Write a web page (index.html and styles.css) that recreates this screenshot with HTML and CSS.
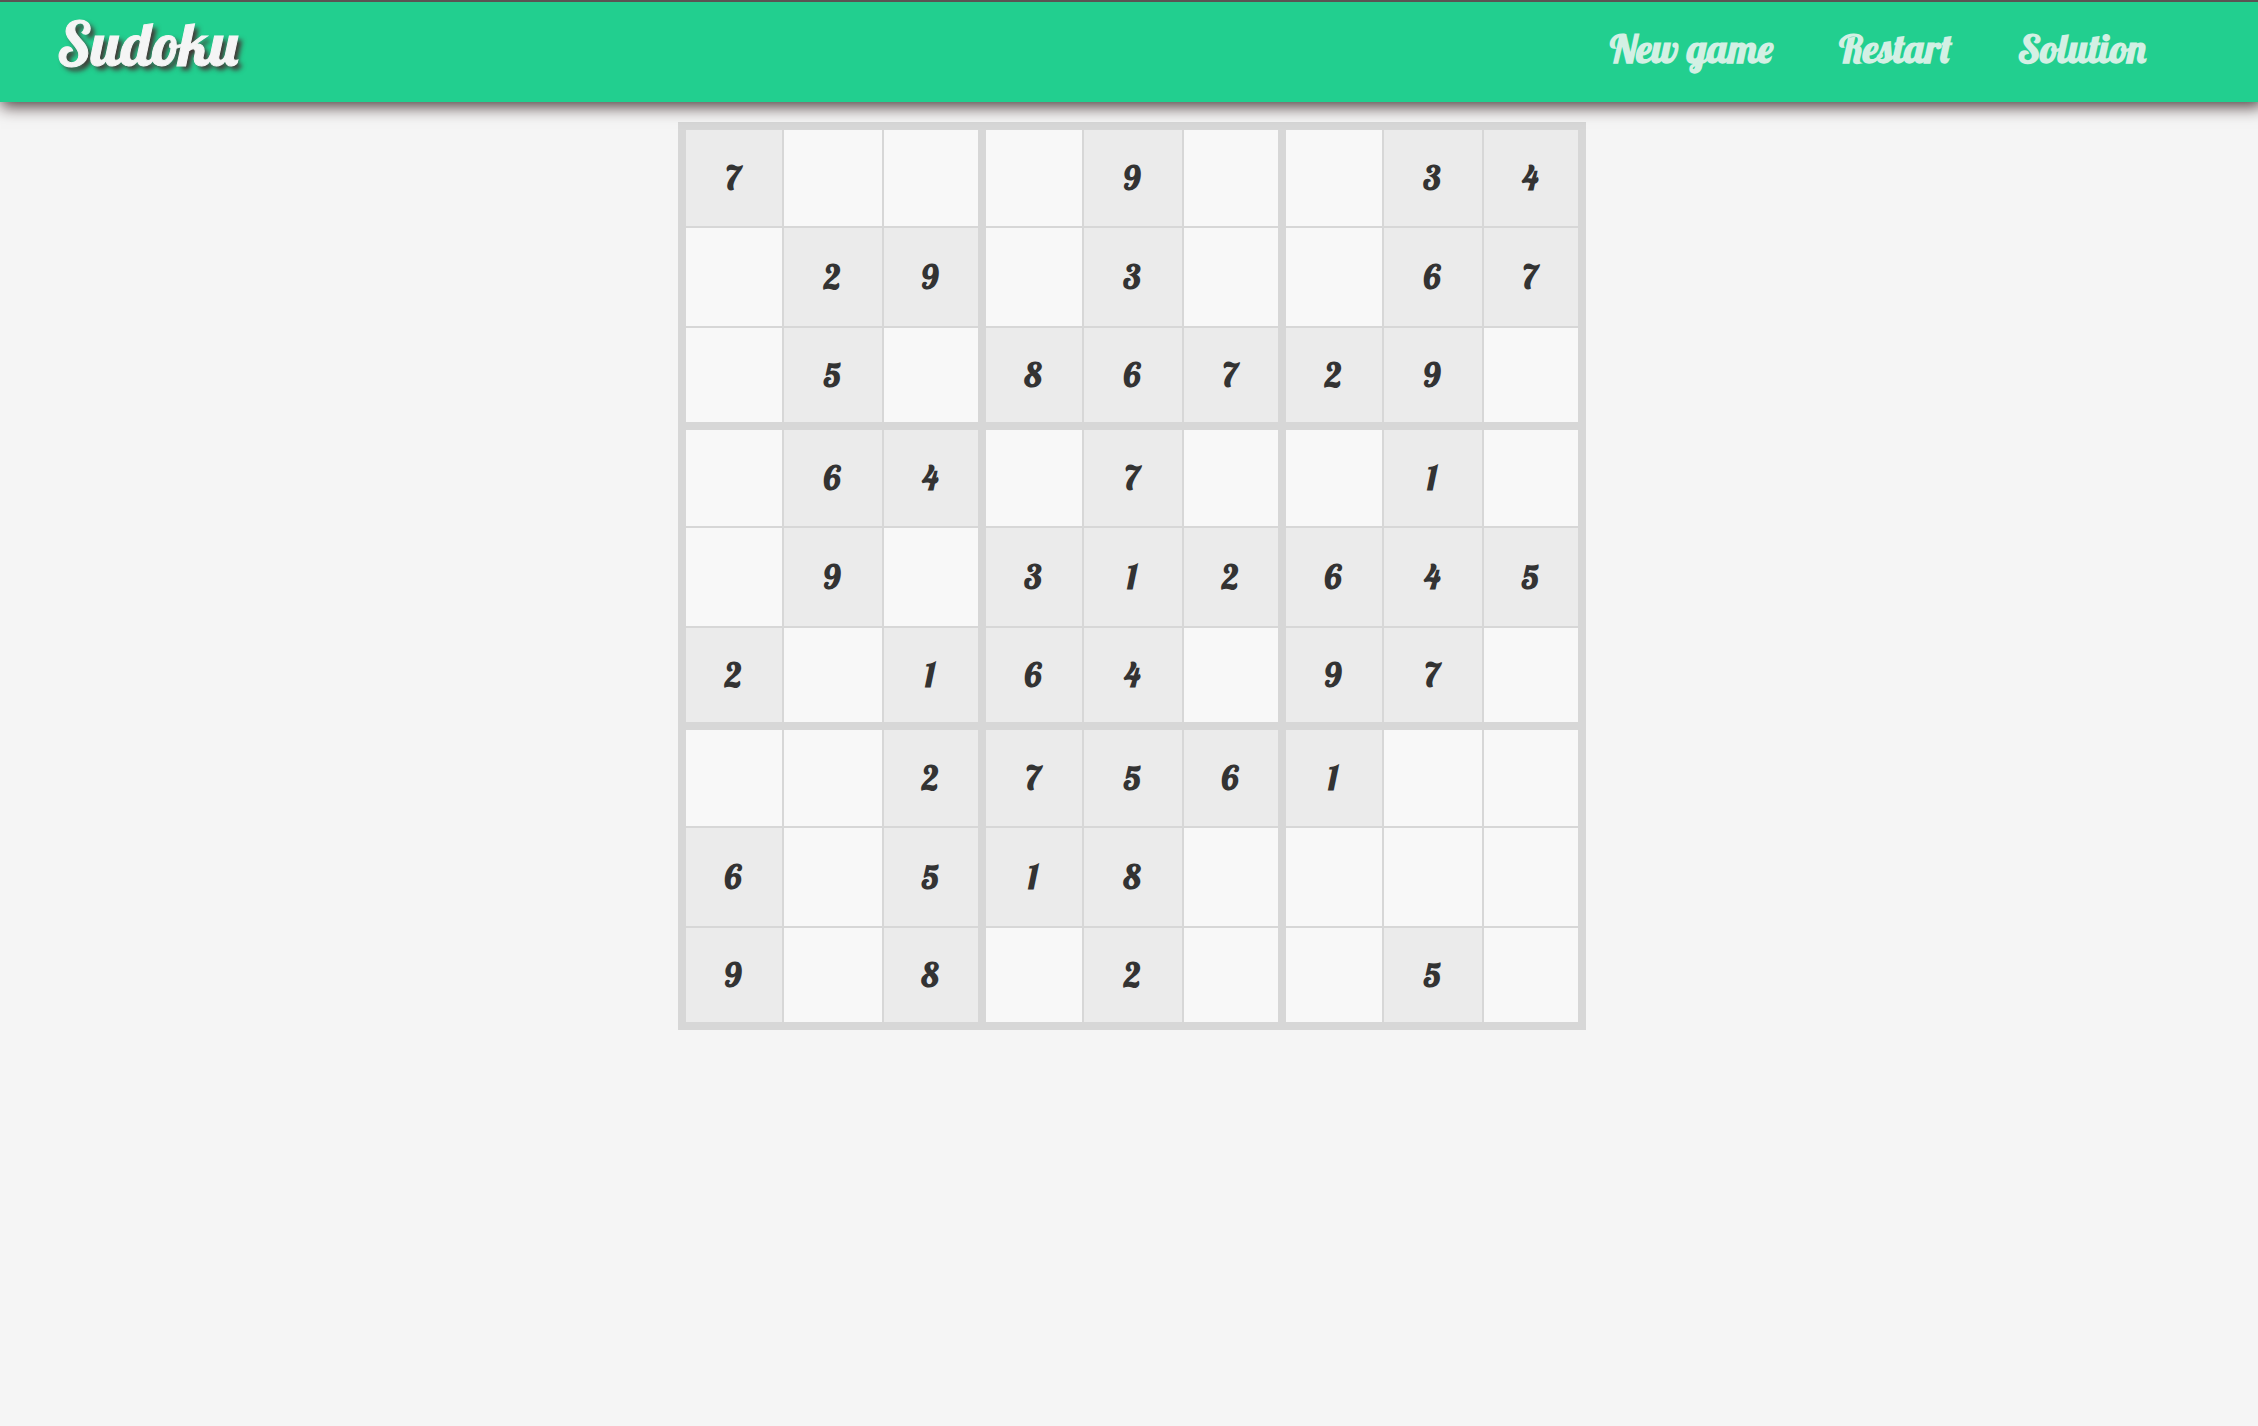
FILE: index.html
```
<!DOCTYPE html>
<html lang="en">
<head>
<meta charset="utf-8">
<meta name="viewport" content="width=device-width, initial-scale=1">
<title>Sudoku</title>
<link rel="stylesheet" href="styles.css">
</head>
<body>
<header class="topbar">
  <h1 class="brand">Sudoku</h1>
  <nav class="menu">
    <a class="menu-link" href="#new">New game</a>
    <a class="menu-link" href="#restart">Restart</a>
    <a class="menu-link" href="#solution">Solution</a>
  </nav>
</header>
<main class="game">
  <table class="board" aria-label="Sudoku board">
    <tbody id="cells"></tbody>
  </table>
</main>
<script src="board.js"></script>
</body>
</html>
```
FILE: styles.css
```
* {
  box-sizing: border-box;
}

body {
  margin: 0;
  background: #f5f5f5;
  color: #333;
  font-family: "Lobster", "Liberation Serif", serif;
  font-weight: bold;
}

.topbar {
  position: relative;
  display: flex;
  justify-content: space-between;
  align-items: flex-start;
  height: 102px;
  padding: 0 112px 0 57px;
  border-top: 2px solid #5b5353;
  background: #22cf8f;
  box-shadow: 3px 3px 15px 2px #544444;
}

.brand {
  margin: 0;
  padding-top: 8px;
  color: #f5f5f5;
  font-size: 60px;
  font-weight: normal;
  line-height: 68px;
  text-shadow: 4px 4px 5px #443333;
  -webkit-text-stroke: 1px #f5f5f5;
}

.menu {
  display: flex;
  gap: 66px;
  padding-top: 24px;
}

.menu-link {
  color: #d3f0e4;
  font-size: 40px;
  line-height: 44px;
  text-decoration: none;
}

.game {
  display: flex;
  justify-content: center;
  padding: 20px 0 20px 6px;
}

.board {
  border: 0 solid #d7d7d7;
  border-width: 8px 0 0 8px;
  border-spacing: 0;
  table-layout: fixed;
}

.cell {
  width: 98px;
  height: 98px;
  padding: 0 2px 0 0;
  border: 0 solid #d7d7d7;
  border-width: 0 2px 2px 0;
  background: #f8f8f8;
  font-size: 33px;
  line-height: 44px;
  text-align: center;
}

.cell:nth-child(3n + 2) {
  width: 100px;
}

.cell:nth-child(3n) {
  width: 102px;
  border-right-width: 8px;
}

.row:nth-child(3n + 2) .cell {
  height: 100px;
}

.row:nth-child(3n) .cell {
  height: 102px;
  border-bottom-width: 8px;
}

.given {
  background: #ebebeb;
}

.entry {
  display: block;
  width: 100%;
  height: 44px;
  padding: 0;
  border: 0;
  outline: 0;
  background: transparent;
  color: inherit;
  font: inherit;
  text-align: center;
}
```
FILE: board.js
```
const puzzle = [
  "7...9..34",
  ".29.3..67",
  ".5.86729.",
  ".64.7..1.",
  ".9.312645",
  "2.164.97.",
  "..27561..",
  "6.518....",
  "9.8.2..5."
];

const body = document.getElementById("cells");

puzzle.forEach((line, r) => {
  const row = body.insertRow();
  row.className = "row";
  [...line].forEach((value, c) => {
    const cell = row.insertCell();
    cell.className = "cell";
    if (value !== ".") {
      cell.classList.add("given");
      cell.textContent = value;
      return;
    }
    const entry = document.createElement("input");
    entry.className = "entry";
    entry.type = "text";
    entry.inputMode = "numeric";
    entry.maxLength = 1;
    entry.setAttribute("aria-label", `Row ${r + 1}, column ${c + 1}`);
    cell.append(entry);
  });
});
```
